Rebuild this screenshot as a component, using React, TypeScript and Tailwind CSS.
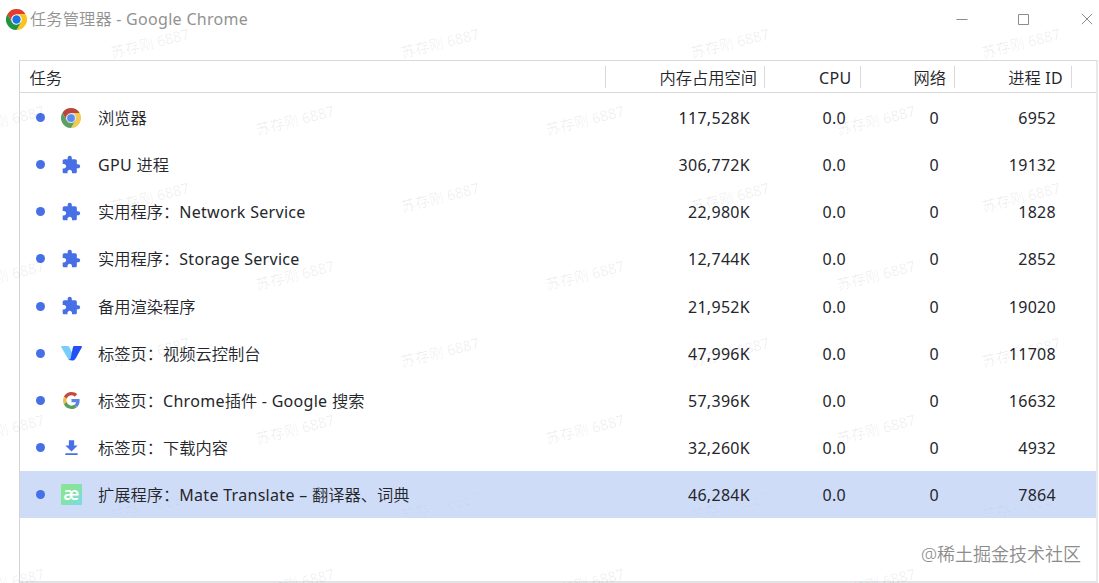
import React from "react";
import clsx from "clsx";

interface ITask {
  icon: React.ReactElement;
  name: string;
  memory: string;
  cpu: string;
  network: string;
  pid: string;
}

const ChromeIcon: React.FC<{ className?: string }> = ({ className }) => (
  <svg viewBox="0 0 48 48" className={className}>
    <circle cx="24" cy="24" r="12" fill="#fff" />
    <path
      fill="#e33b2e"
      d="M24,12H44.7812a23.9939,23.9939,0,0,0-41.5639.0029L13.6079,30l.0093-.0024A11.9852,11.9852,0,0,1,24,12Z"
    />
    <path
      fill="#fcc31e"
      d="M34.3913,30.0029,24.0007,48A23.994,23.994,0,0,0,44.78,12.0031H23.9989l-.0025.0093A11.985,11.985,0,0,1,34.3913,30.0029Z"
    />
    <path
      fill="#229342"
      d="M13.6086,30.0031,3.218,12.006A23.994,23.994,0,0,0,24.0025,48L34.3931,30.0029l-.0067-.0068a11.9852,11.9852,0,0,1-20.7778.007Z"
    />
    <circle cx="24" cy="24" r="9.5" fill="#1a73e8" />
  </svg>
);

const ChromeSmallIcon = () => (
  <svg viewBox="0 0 48 48" className="size-5">
    <circle cx="24" cy="24" r="12" fill="#dfe6f5" />
    <path
      fill="#b9473c"
      d="M24,12H44.7812a23.9939,23.9939,0,0,0-41.5639.0029L13.6079,30l.0093-.0024A11.9852,11.9852,0,0,1,24,12Z"
    />
    <path
      fill="#f0cb50"
      d="M34.3913,30.0029,24.0007,48A23.994,23.994,0,0,0,44.78,12.0031H23.9989l-.0025.0093A11.985,11.985,0,0,1,34.3913,30.0029Z"
    />
    <path
      fill="#5d9f62"
      d="M13.6086,30.0031,3.218,12.006A23.994,23.994,0,0,0,24.0025,48L34.3931,30.0029l-.0067-.0068a11.9852,11.9852,0,0,1-20.7778.007Z"
    />
    <circle cx="24" cy="24" r="9.3" fill="#5b8bee" />
  </svg>
);

const PuzzleIcon = () => (
  <svg viewBox="0 0 24 24" className="size-5" fill="#4770e6">
    <path d="M20.5 11H19V7c0-1.1-.9-2-2-2h-4V3.5C13 2.12 11.88 1 10.5 1S8 2.12 8 3.5V5H4c-1.1 0-1.99.9-1.99 2v3.8H3.5c1.49 0 2.7 1.21 2.7 2.7s-1.21 2.7-2.7 2.7H2V20c0 1.1.9 2 2 2h3.8v-1.5c0-1.49 1.21-2.7 2.7-2.7 1.49 0 2.7 1.21 2.7 2.7V22H17c1.1 0 2-.9 2-2v-4h1.5c1.38 0 2.5-1.12 2.5-2.5S21.88 11 20.5 11z" />
  </svg>
);

const VideoCloudIcon = () => (
  <svg viewBox="0 0 21 21" className="size-[21px]">
    <path
      fill="#78cdfb"
      d="M1 3h5.800c.7 0 1.200.3 1.500.9l3.200 6.600-2.600 6.400c-.6.300-1.200.1-1.500-.5L.3 4.300C0 3.600.3 3 1 3z"
    />
    <path
      fill="#2350f5"
      d="M13.600 3H20c.8 0 1.200.6.9 1.300l-6.100 10.900c-.9 1.600-2 2.300-3.600 2.300-1.500 0-2.700-.2-3.600-.8 1.100-.1 1.700-.7 2.100-1.700l2.200-10.700c.2-.9.8-1.300 1.700-1.300z"
    />
  </svg>
);

const GoogleIcon = () => (
  <svg viewBox="0 0 48 48" className="size-[17px]">
    <path
      fill="#c5493d"
      d="M24 9.5c3.54 0 6.71 1.22 9.21 3.6l6.85-6.85C35.9 2.38 30.47 0 24 0 14.62 0 6.51 5.38 2.56 13.22l7.98 6.19C12.43 13.72 17.74 9.5 24 9.5z"
    />
    <path
      fill="#5b83ea"
      d="M46.98 24.55c0-1.57-.15-3.09-.38-4.55H24v9.02h12.94c-.58 2.96-2.26 5.48-4.78 7.18l7.73 6c4.51-4.18 7.09-10.36 7.09-17.65z"
    />
    <path
      fill="#e9bf45"
      d="M10.53 28.59c-.48-1.45-.76-2.99-.76-4.59s.27-3.14.76-4.59l-7.98-6.19C.92 16.46 0 20.12 0 24c0 3.88.92 7.54 2.56 10.78l7.97-6.19z"
    />
    <path
      fill="#5a9e5c"
      d="M24 48c6.48 0 11.93-2.13 15.89-5.81l-7.73-6c-2.15 1.45-4.92 2.3-8.16 2.3-6.26 0-11.57-4.22-13.47-9.91l-7.98 6.19C6.51 42.62 14.62 48 24 48z"
    />
  </svg>
);

const DownloadIcon = () => (
  <svg viewBox="0 0 24 24" className="size-[22px]" fill="#4770e6">
    <path d="M5 20h14v-2H5v2zM19 9h-4V3H9v6H5l7 7 7-7z" />
  </svg>
);

const MateIcon = () => (
  <div className="flex size-[21px] items-center justify-center rounded-[1px] bg-linear-to-br from-[#86e596] from-35% to-[#7ad9e6]">
    <span className="-mt-[4px] font-['Open_Sans',sans-serif] text-[18px] leading-none font-semibold tracking-[-0.5px] text-white">
      æ
    </span>
  </div>
);

const tasks: ITask[] = [
  { icon: <ChromeSmallIcon />, name: "浏览器", memory: "117,528K", cpu: "0.0", network: "0", pid: "6952" },
  { icon: <PuzzleIcon />, name: "GPU 进程", memory: "306,772K", cpu: "0.0", network: "0", pid: "19132" },
  { icon: <PuzzleIcon />, name: "实用程序：Network Service", memory: "22,980K", cpu: "0.0", network: "0", pid: "1828" },
  { icon: <PuzzleIcon />, name: "实用程序：Storage Service", memory: "12,744K", cpu: "0.0", network: "0", pid: "2852" },
  { icon: <PuzzleIcon />, name: "备用渲染程序", memory: "21,952K", cpu: "0.0", network: "0", pid: "19020" },
  { icon: <VideoCloudIcon />, name: "标签页：视频云控制台", memory: "47,996K", cpu: "0.0", network: "0", pid: "11708" },
  { icon: <GoogleIcon />, name: "标签页：Chrome插件 - Google 搜索", memory: "57,396K", cpu: "0.0", network: "0", pid: "16632" },
  { icon: <DownloadIcon />, name: "标签页：下载内容", memory: "32,260K", cpu: "0.0", network: "0", pid: "4932" },
  { icon: <MateIcon />, name: "扩展程序：Mate Translate – 翻译器、词典", memory: "46,284K", cpu: "0.0", network: "0", pid: "7864" },
];

const selectedPid = "7864";

const columns = [
  { label: "任务", width: "w-[586px] pl-[9.5px]" },
  { label: "内存占用空间", width: "w-[159px] justify-end pr-[7px]" },
  { label: "CPU", width: "w-24 justify-end pr-[8.5px]" },
  { label: "网络", width: "w-[94px] justify-end pr-[8px]" },
  { label: "进程 ID", width: "w-[117px] justify-end pr-[8px]" },
];

// latin runs are set a little smaller and wider than the chinese ones
const Label: React.FC<{ text: string }> = ({ text }) => (
  <span className="whitespace-pre">
    {text.split(/([ -~–]+)/).map((part, i) =>
      i % 2 ? (
        <span key={i} className="text-[0.985em] font-normal tracking-[0.3px]">
          {part}
        </span>
      ) : (
        part
      )
    )}
  </span>
);

const marks = [0, 1, 2, 3, 4, 5, 6, 7].flatMap((row) =>
  [0, 1, 2, 3].map((col) => ({
    left: (row % 2 ? 4.5 : 149.5) + col * 290.4,
    top: 43 + row * 77.2,
    // the selected row nearly swallows the mark
    faint: row === 6,
  }))
);

const Watermark = () => (
  <div className="pointer-events-none absolute inset-0 overflow-hidden">
    {marks.map(({ left, top, faint }) => (
      <span
        key={`${left}-${top}`}
        className={clsx(
          "absolute -translate-1/2 -rotate-[14deg] text-[14.5px] leading-none font-normal whitespace-nowrap",
          faint ? "text-black/3" : "text-black/7"
        )}
        style={{ left, top }}
      >
        苏存刚 6887
      </span>
    ))}
  </div>
);

const App: React.FC = (): React.ReactElement => {
  return (
    <div className="relative flex h-[583px] w-[1099px] flex-col overflow-hidden bg-white font-['Noto_Sans','Noto_Sans_CJK_SC',sans-serif] text-[16.25px] leading-none font-[350] text-[#24262b]">
      <div className="flex h-[60px] shrink-0 items-start justify-between">
        <div className="flex h-[39px] items-center pl-1.5 text-[#929292]">
          <ChromeIcon className="size-[21px]" />
          <div className="ml-[3px] tracking-[0.1px]">
            <Label text="任务管理器 - Google Chrome" />
          </div>
        </div>
        <div className="flex h-[38px] items-center pr-[6px]">
          <svg viewBox="0 0 12 12" className="size-3" fill="none" stroke="#8c8c8c">
            <path d="M.5 6.500h11" />
          </svg>
          <svg viewBox="0 0 12 12" className="ml-[50px] size-3" fill="none" stroke="#8c8c8c">
            <path d="M.5 1.500h10v10H.5z" />
          </svg>
          <svg viewBox="0 0 12 12" className="ml-[51px] size-3" fill="none" stroke="#8c8c8c">
            <path d="M.8.8l10.400 10.400M11.200.8L.8 11.200" />
          </svg>
        </div>
      </div>

      <div className="ml-[19px] h-[523px] w-[1079px] border-t border-r-2 border-b-2 border-l border-t-[#d9d9db] border-r-[#e9e9eb] border-b-[#e3e3e5] border-l-[#d4d4d8]">
        <div className="flex h-8 items-center border-b border-[#d9d9db]">
          {columns.map(({ label, width }) => (
            <div
              key={label}
              className={clsx("mt-px flex h-[22px] items-center border-r border-[#d9d9db] pt-[3px]", width)}
            >
              <Label text={label} />
            </div>
          ))}
        </div>
        <div className="pt-px">
          {tasks.map((task) => (
            <div
              key={task.pid}
              className={clsx(
                "flex h-[47.15px] items-center",
                task.pid === selectedPid && "bg-[#cfdcf8]"
              )}
            >
              <div className="ml-4 size-[9px] rounded-full bg-[#4770e6]" />
              <div className="ml-[15.5px] flex w-[21px] items-center justify-center">{task.icon}</div>
              <div className="ml-[16.5px] w-[500px] pt-px">
                <Label text={task.name} />
              </div>
              <div className="w-[152px] pt-px text-right">
                <Label text={task.memory} />
              </div>
              <div className="w-24 pt-px text-right">
                <Label text={task.cpu} />
              </div>
              <div className="w-[93px] pt-px text-right">
                <Label text={task.network} />
              </div>
              <div className="w-[117px] pt-px text-right">
                <Label text={task.pid} />
              </div>
            </div>
          ))}
        </div>
      </div>

      <Watermark />
      <div className="absolute right-[18px] bottom-[20px] text-[18px] font-[350] text-[#8c8c8c]">
        @稀土掘金技术社区
      </div>
    </div>
  );
};

export default App;
